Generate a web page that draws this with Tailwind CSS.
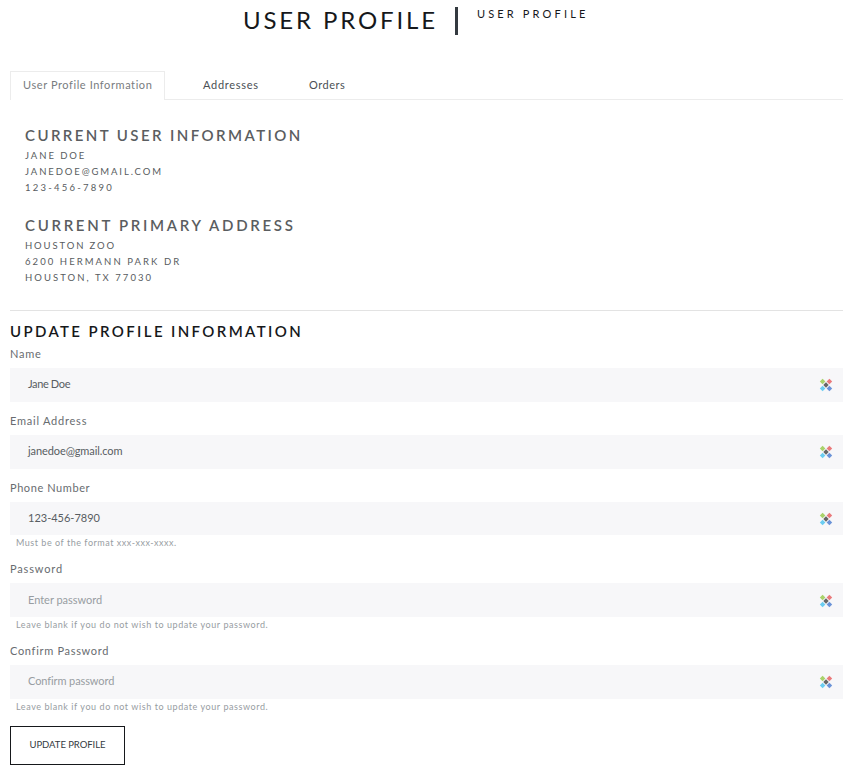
<!DOCTYPE html>
<html lang="en">
<head>
<meta charset="utf-8">
<title>User Profile</title>
<script src="https://cdn.jsdelivr.net/npm/@tailwindcss/browser@4"></script>
</head>
<body class="bg-white font-['Lato','Noto_Sans',sans-serif] text-[11px] text-[#686c70] w-[852px] h-[771px] overflow-hidden whitespace-nowrap">
<svg class="hidden">
  <symbol id="mark" viewBox="0 0 14 14">
    <path fill="#a9d26b" d="M3.6.7 6.4 3.5 3.6 6.3.8 3.5Z"/>
    <path fill="#ea7a7c" d="M10.4.7 13.2 3.5 10.4 6.3 7.6 3.5Z"/>
    <path fill="#6bcdf2" d="M3.6 7.7 6.4 10.5 3.6 13.3.8 10.5Z"/>
    <path fill="#6b93d8" d="M10.4 7.7 13.2 10.5 10.4 13.3 7.6 10.5Z"/>
    <path fill="#666" d="M7 4.3 9.7 7 7 9.7 4.3 7Z"/>
  </symbol>
</svg>
<header class="flex h-[71px] pl-[243px] text-[#16181b]">
  <h1 class="w-[212px] pt-1 text-[24px] leading-8 tracking-[2.85px]">USER PROFILE</h1>
  <div class="mt-[7px] h-7 w-[3px] bg-[#343a40]"></div>
  <p class="pl-[19px] pt-[6px] leading-4 tracking-[3.15px]">USER PROFILE</p>
</header>
<main class="pl-[10px] pr-[9px]">
  <nav class="flex h-[29px] leading-[27px] text-[#4a4f54]">
    <a class="w-[155px] border border-b-0 border-[#ececec] pl-3 leading-[25px] tracking-[.58px] text-[#787c80]">User Profile Information</a>
    <div class="flex flex-1 border-b border-[#ececec]">
      <a class="w-[106px] pl-[38px] tracking-[.7px]">Addresses</a>
      <a class="pl-[38px] tracking-[.52px]">Orders</a>
    </div>
  </nav>
  <section class="pt-6 pl-[15px] h-[210px] text-[9.5px] leading-4 text-[#585c60]">
    <h2 class="mb-[2px] text-[15px] font-semibold leading-[22px] tracking-[2.42px] text-[#5a5d60]">CURRENT USER INFORMATION</h2>
    <p class="tracking-[1.93px]">JANE DOE</p>
    <p class="tracking-[1.89px]">JANEDOE@GMAIL.COM</p>
    <p class="tracking-[2.24px]">123-456-7890</p>
    <h2 class="mt-[18px] mb-[2px] text-[15px] font-semibold leading-[22px] tracking-[2.69px] text-[#5a5d60]">CURRENT PRIMARY ADDRESS</h2>
    <p class="tracking-[1.87px]">HOUSTON ZOO</p>
    <p class="tracking-[2.07px]">6200 HERMANN PARK DR</p>
    <p class="tracking-[2.05px]">HOUSTON, TX 77030</p>
  </section>
  <form class="border-t border-[#e3e3e3] pt-2">
    <h2 class="mb-px text-[15px] font-semibold leading-6 tracking-[2.37px] text-[#16181b]">UPDATE PROFILE INFORMATION</h2>
    <div class="h-[67px]">
      <label class="block h-6 leading-5 tracking-[.75px]">Name</label>
      <div class="flex h-[34px] items-center justify-between bg-[#f7f7f9] pl-[18px] pr-[10px] pb-px text-[#585d62]"><span class="tracking-[-.36px]">Jane Doe</span><svg class="mt-px size-[14px]"><use href="#mark"/></svg></div>
    </div>
    <div class="h-[67px]">
      <label class="block h-6 leading-5 tracking-[.77px]">Email Address</label>
      <div class="flex h-[34px] items-center justify-between bg-[#f7f7f9] pl-[18px] pr-[10px] pb-px text-[#585d62]"><span class="tracking-[-.09px]">janedoe@gmail.com</span><svg class="mt-px size-[14px]"><use href="#mark"/></svg></div>
    </div>
    <div class="h-[81px]">
      <label class="block h-6 leading-5 tracking-[.58px]">Phone Number</label>
      <div class="flex h-[33px] items-center justify-between bg-[#f7f7f9] pl-[18px] pr-[10px] text-[#585d62]"><span>123-456-7890</span><svg class="mt-px size-[14px]"><use href="#mark"/></svg></div>
      <p class="pl-[6px] text-[9px] leading-4 tracking-[.53px] text-[#979da2]">Must be of the format xxx-xxx-xxxx.</p>
    </div>
    <div class="h-[82px]">
      <label class="block h-6 leading-5 tracking-[.85px]">Password</label>
      <div class="flex h-[34px] items-center justify-between bg-[#f7f7f9] pl-[18px] pr-[10px] text-[#979da2]"><span class="tracking-[-.02px]">Enter password</span><svg class="mt-px size-[14px]"><use href="#mark"/></svg></div>
      <p class="pl-[6px] text-[9px] leading-4 tracking-[.57px] text-[#979da2]">Leave blank if you do not wish to update your password.</p>
    </div>
    <div class="h-[85px]">
      <label class="block h-6 leading-5 tracking-[.69px]">Confirm Password</label>
      <div class="flex h-[34px] items-center justify-between bg-[#f7f7f9] pl-[18px] pr-[10px] pb-px text-[#979da2]"><span class="tracking-[-.1px]">Confirm password</span><svg class="mt-px size-[14px]"><use href="#mark"/></svg></div>
      <p class="pl-[6px] text-[9px] leading-4 tracking-[.57px] text-[#979da2]">Leave blank if you do not wish to update your password.</p>
    </div>
    <button class="block h-[39px] w-[115px] border border-[#16181b] pb-px text-[9.5px] tracking-[-.05px] text-[#343a40]">UPDATE PROFILE</button>
  </form>
</main>
</body>
</html>
